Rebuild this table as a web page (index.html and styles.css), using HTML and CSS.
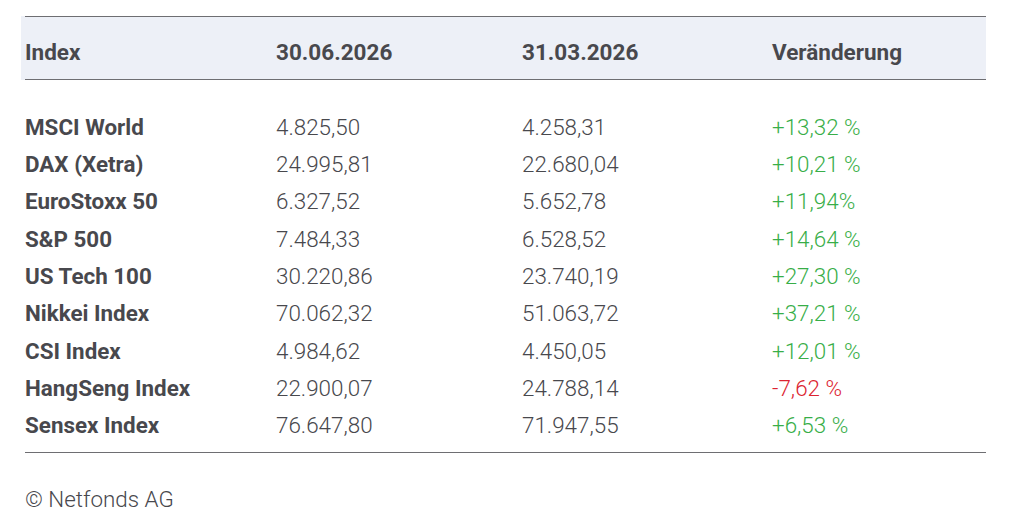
FILE: index.html
```html
<!DOCTYPE html>
<html lang="de">
<head>
<meta charset="utf-8">
<title>Indizes</title>
<link rel="stylesheet" href="styles.css">
</head>
<body>
<div class="page">
  <div class="thead-wrap">
    <div class="row thead">
      <div class="cell">Index</div>
      <div class="cell">30.06.2026</div>
      <div class="cell">31.03.2026</div>
      <div class="cell">Veränderung</div>
    </div>
  </div>
  <div class="tbody">
    <div class="row"><div class="cell name">MSCI World</div><div class="cell">4.825,50</div><div class="cell">4.258,31</div><div class="cell up">+13,32 %</div></div>
    <div class="row"><div class="cell name">DAX (Xetra)</div><div class="cell">24.995,81</div><div class="cell">22.680,04</div><div class="cell up">+10,21 %</div></div>
    <div class="row"><div class="cell name">EuroStoxx 50</div><div class="cell">6.327,52</div><div class="cell">5.652,78</div><div class="cell up">+11,94%</div></div>
    <div class="row"><div class="cell name">S&amp;P 500</div><div class="cell">7.484,33</div><div class="cell">6.528,52</div><div class="cell up">+14,64 %</div></div>
    <div class="row"><div class="cell name">US Tech 100</div><div class="cell">30.220,86</div><div class="cell">23.740,19</div><div class="cell up">+27,30 %</div></div>
    <div class="row"><div class="cell name">Nikkei Index</div><div class="cell">70.062,32</div><div class="cell">51.063,72</div><div class="cell up">+37,21 %</div></div>
    <div class="row"><div class="cell name">CSI Index</div><div class="cell">4.984,62</div><div class="cell">4.450,05</div><div class="cell up">+12,01 %</div></div>
    <div class="row"><div class="cell name">HangSeng Index</div><div class="cell">22.900,07</div><div class="cell">24.788,14</div><div class="cell down">-7,62 %</div></div>
    <div class="row"><div class="cell name">Sensex Index</div><div class="cell">76.647,80</div><div class="cell">71.947,55</div><div class="cell up">+6,53 %</div></div>
  </div>
  <div class="footer">© Netfonds AG</div>
</div>
</body>
</html>
```

FILE: styles.css
```css
html, body {
  margin: 0;
  padding: 0;
  background: #ffffff;
}

body {
  font-family: Roboto, "Liberation Sans", sans-serif;
  color: #48484d;
}

.page {
  width: 965px;
  margin-left: 21px;
  padding-top: 16px;
}

.thead-wrap {
  background: #edf0f7;
  padding-left: 4px;
}

.row {
  display: grid;
  grid-template-columns: 251px 246px 250px 1fr;
}

.thead {
  border-top: 1px solid #6e6e72;
  border-bottom: 1px solid #6e6e72;
  height: 62px;
  align-items: center;
  font-weight: 700;
  font-size: 22.5px;
}

.thead .cell {
  padding-top: 7px;
}

.tbody {
  margin-left: 4px;
  padding-top: 28px;
  padding-bottom: 8px;
  border-bottom: 1px solid #6e6e72;
}

.tbody .row {
  height: 37.33px;
  align-items: center;
  font-size: 22.4px;
  font-weight: 300;
}

.tbody .name {
  font-weight: 700;
}

.up {
  color: #38ae48;
}

.down {
  color: #dc2330;
}

.footer {
  margin-left: 4px;
  padding-top: 33px;
  font-size: 22.4px;
  font-weight: 300;
  color: #48484d;
}
```
